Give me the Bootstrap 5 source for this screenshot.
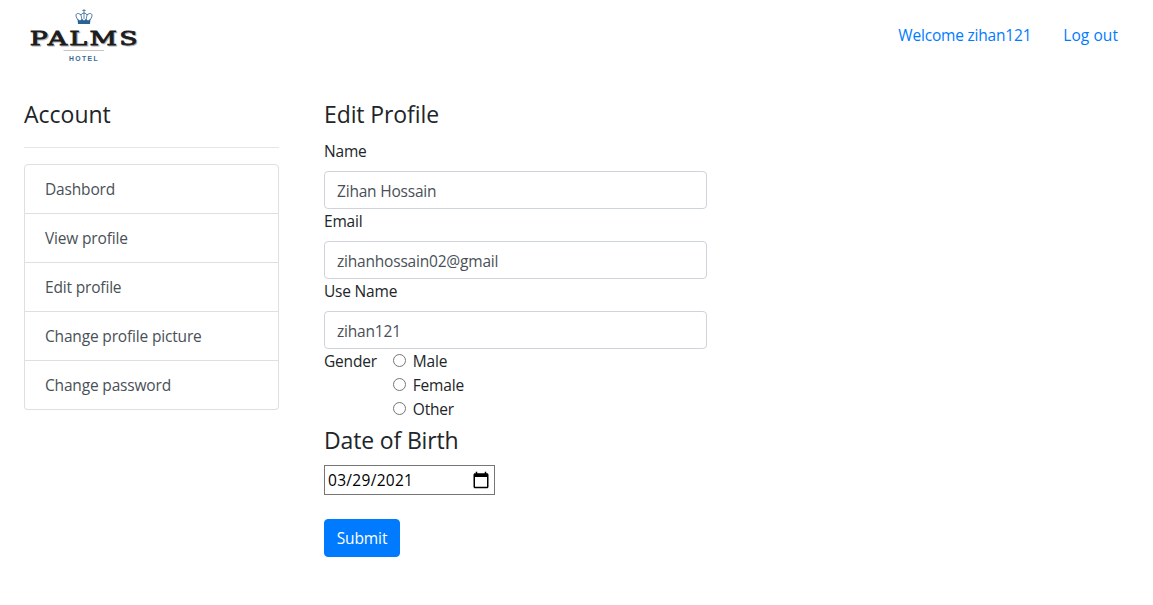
<!DOCTYPE html>
<html lang="en">
<head>
<meta charset="utf-8">
<meta name="viewport" content="width=device-width, initial-scale=1">
<title>Edit Profile</title>
<link href="https://cdn.jsdelivr.net/npm/bootstrap@5.3.0/dist/css/bootstrap.min.css" rel="stylesheet">
<style>
  body { font-family: "Open Sans", "Noto Sans", sans-serif; font-size: 15.5px; line-height: 24px; letter-spacing: -.2px; color: #212529; }
  .topbar { height: 71px; padding: 0 35px 0 24px; }
  .topbar nav { padding-bottom: 2px; }
  .topbar a { color: #007bff; text-decoration: none; }
  .topbar .log-out { letter-spacing: .07px; }
  .page-body { padding: 29px 24px 0; gap: 45px; }
  .side { width: 255px; }
  .main-form { width: 383px; }
  h4 { font-size: 23px; line-height: 29px; font-weight: 400; letter-spacing: -.1px; margin: 0 0 10px; }
  .side h4 { margin-bottom: 18px; letter-spacing: 0; }
  .side hr { margin: 0 0 16px; border-top: 1px solid #e5e5e5; opacity: 1; }
  .list-group { --bs-list-group-border-color: #dfdfdf; --bs-list-group-border-radius: 4px; }
  .list-group-item { padding: 12px 20px; color: #495057; letter-spacing: -.17px; }
  .form-label { display: block; height: 24px; margin-bottom: 8px; }
  .form-control { height: 38px; padding: 7px 12px 5px; font-size: 15.5px; line-height: 24px; letter-spacing: -.2px; color: #495057; border-color: #ced4da; border-radius: 4px; }
  .choice { height: 24px; gap: 7px; }
  .choice input { width: 13px; height: 13px; margin: 0 0 2px; }
  .main-form .birth-title { padding-top: 5px; letter-spacing: -.15px; }
  .birth { width: 171px; height: 30px; padding: 1px 2px 1px 3px; border: 1px solid #767676; border-radius: 0; font-size: 15.5px; color: #000; background: #fff; letter-spacing: .3px; }
  .birth::-webkit-calendar-picker-indicator { width: 18px; height: 18px; padding: 0; margin-right: 2px; background-size: 18px 18px; }
  .btn-submit { height: 38px; width: 76px; margin-top: 24px; padding: 1px 0 0; background: #007bff !important; border-color: #007bff; border-radius: 4px; color: #fff; font-size: 15.5px; letter-spacing: -.1px; }
</style>
</head>
<body class="bg-white">
<header class="topbar d-flex justify-content-between align-items-center">
  <svg width="120" height="71" viewBox="0 0 120 71" role="img" aria-label="Palms Hotel">
    <g fill="none" stroke="#3d6f9c" stroke-width="1">
      <path d="M54.500 20.500C49.500 14.500 53 11.500 57 15C58 12.500 62 12.500 63 15C67 11.500 70.500 14.500 65.500 20.500"/>
      <path d="M57 15L58 20M63 15L62 20M60 9V19M58.300 10.500H61.700" stroke-width=".8"/>
    </g>
    <path d="M53.500 19L56 20.500L58 19L60 20.500L62 19L64 20.500L66.500 19L66 24H54Z" fill="#2b6294"/>
    <g font-family="DejaVu Serif, serif" font-weight="400" font-size="18.500" stroke-width=".8" letter-spacing="1.6">
      <text x="7" y="46.200" textLength="110" lengthAdjust="spacingAndGlyphs" fill="#b0b0b0" stroke="#b8b8b8">PALMS</text>
      <text x="5.800" y="45" textLength="110" lengthAdjust="spacingAndGlyphs" fill="#1c1c1c" stroke="#1c1c1c">PALMS</text>
    </g>
    <path d="M39.500 50.500H80" stroke="#c4c4c4"/>
    <text x="45" y="61.300" textLength="28.500" font-family="Liberation Sans, sans-serif" font-weight="700" font-size="6.800" fill="#386a91">HOTEL</text>
  </svg>
  <nav class="d-flex">
    <a href="#" class="me-4 pe-2">Welcome zihan121</a>
    <a href="#" class="log-out">Log out</a>
  </nav>
</header>
<main class="page-body d-flex align-items-start">
  <aside class="side flex-shrink-0">
    <h4>Account</h4>
    <hr>
    <div class="list-group">
      <a href="#" class="list-group-item list-group-item-action">Dashbord</a>
      <a href="#" class="list-group-item list-group-item-action">View profile</a>
      <a href="#" class="list-group-item list-group-item-action">Edit profile</a>
      <a href="#" class="list-group-item list-group-item-action">Change profile picture</a>
      <a href="#" class="list-group-item list-group-item-action">Change password</a>
    </div>
  </aside>
  <form class="main-form">
    <h4>Edit Profile</h4>
    <label class="form-label" for="name">Name</label>
    <input class="form-control" id="name" type="text" value="Zihan Hossain">
    <label class="form-label" for="email">Email</label>
    <input class="form-control" id="email" type="text" value="zihanhossain02@gmail">
    <label class="form-label" for="user">Use Name</label>
    <input class="form-control" id="user" type="text" value="zihan121">
    <div class="d-flex">
      <span class="me-3">Gender</span>
      <div>
        <label class="choice d-flex align-items-center"><input type="radio" name="gender">Male</label>
        <label class="choice d-flex align-items-center"><input type="radio" name="gender">Female</label>
        <label class="choice d-flex align-items-center"><input type="radio" name="gender">Other</label>
      </div>
    </div>
    <h4 class="birth-title">Date of Birth</h4>
    <input class="birth d-block" type="date" value="2021-03-29" aria-label="Date of Birth">
    <button class="btn btn-primary btn-submit" type="button">Submit</button>
  </form>
</main>
<script src="https://cdn.jsdelivr.net/npm/bootstrap@5.3.0/dist/js/bootstrap.bundle.min.js"></script>
</body>
</html>
